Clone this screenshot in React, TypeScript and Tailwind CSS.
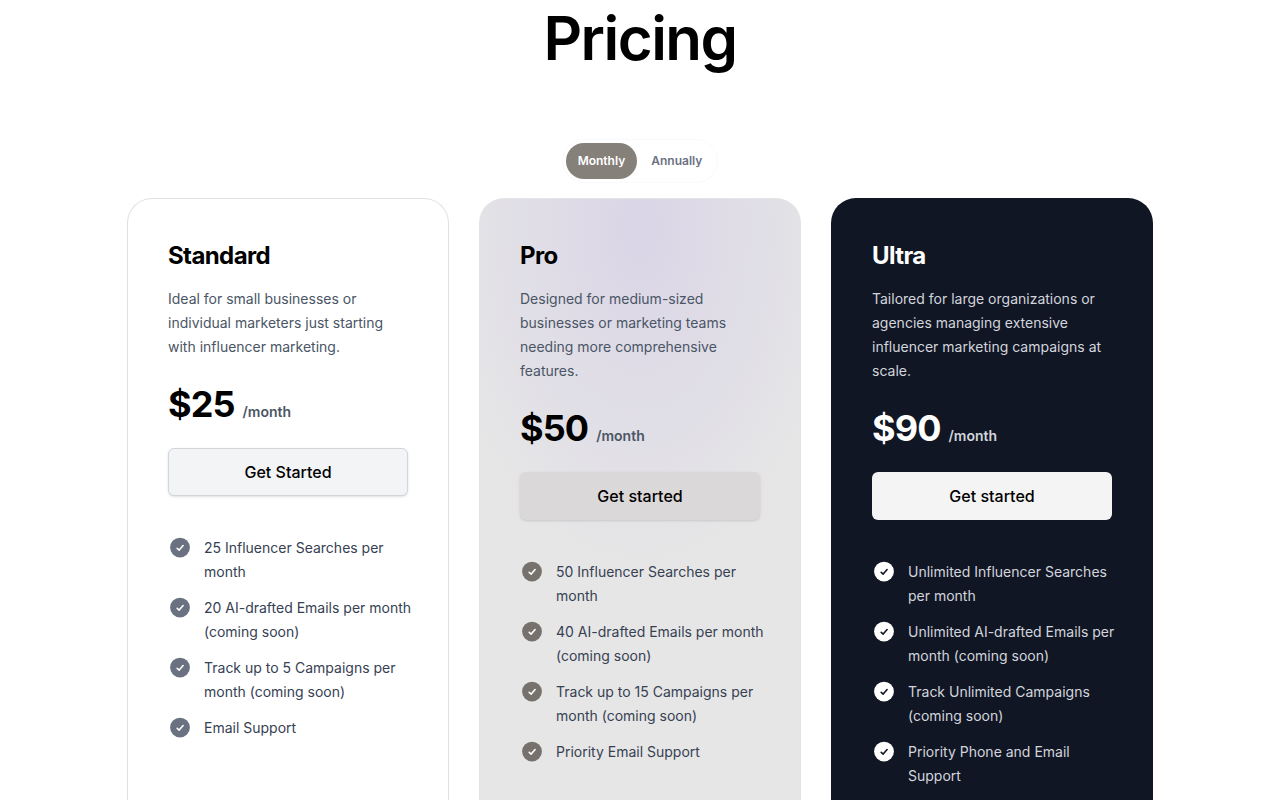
import React, { useState } from 'react';
import clsx from 'clsx';

type Plan = {
  id: string;
  name: string;
  description: string;
  monthly: string;
  annually: string;
  cta: string;
  features: string[];
};

const plans: Plan[] = [
  {
    id: 'standard',
    name: 'Standard',
    description: 'Ideal for small businesses or individual marketers just starting with influencer marketing.',
    monthly: '$25',
    annually: '$250',
    cta: 'Get Started',
    features: [
      '25 Influencer Searches per month',
      '20 AI-drafted Emails per month (coming soon)',
      'Track up to 5 Campaigns per month (coming soon)',
      'Email Support',
    ],
  },
  {
    id: 'pro',
    name: 'Pro',
    description: 'Designed for medium-sized businesses or marketing teams needing more comprehensive features.',
    monthly: '$50',
    annually: '$500',
    cta: 'Get started',
    features: [
      '50 Influencer Searches per month',
      '40 AI-drafted Emails per month (coming soon)',
      'Track up to 15 Campaigns per month (coming soon)',
      'Priority Email Support',
    ],
  },
  {
    id: 'ultra',
    name: 'Ultra',
    description:
      'Tailored for large organizations or agencies managing extensive influencer marketing campaigns at scale.',
    monthly: '$90',
    annually: '$900',
    cta: 'Get started',
    features: [
      'Unlimited Influencer Searches per month',
      'Unlimited AI-drafted Emails per month (coming soon)',
      'Track Unlimited Campaigns (coming soon)',
      'Priority Phone and Email Support',
    ],
  },
];

const CheckIcon = ({ className, stroke }: { className: string; stroke: string }) => (
  <svg viewBox="0 0 24 24" className={clsx('h-6 w-6 flex-none', className)} aria-hidden="true">
    <circle cx="12" cy="11.6" r="9.9" fill="currentColor" />
    <path
      d="M9.2 12.3l2 1.8 3.9-4.5"
      fill="none"
      stroke={stroke}
      strokeWidth="1.6"
      strokeLinecap="round"
      strokeLinejoin="round"
    />
  </svg>
);

export default function App() {
  const [period, setPeriod] = useState<'monthly' | 'annually'>('monthly');

  return (
    <main className="min-h-screen bg-white font-['Inter',sans-serif] text-black">
      <div className="mx-auto max-w-5xl pb-20">
        <h1 className="pt-1.5 text-center text-6xl leading-[64px] font-semibold tracking-tight">Pricing</h1>

        {/* Billing period */}
        <div className="mt-[69px] flex justify-center">
          <div className="flex gap-0.5 rounded-full border border-gray-50 p-[3px] text-xs font-semibold">
            {(['monthly', 'annually'] as const).map((p) => (
              <button
                key={p}
                type="button"
                aria-pressed={period === p}
                onClick={() => setPeriod(p)}
                className={clsx(
                  'h-9 cursor-pointer rounded-full px-3 capitalize',
                  period === p ? 'bg-[#85807a] text-white' : 'text-gray-500'
                )}
              >
                {p}
              </button>
            ))}
          </div>
        </div>

        {/* Plans */}
        <div className="mt-4 grid grid-cols-1 gap-8 md:grid-cols-3">
          {plans.map((plan) => {
            const pro = plan.id === 'pro';
            const ultra = plan.id === 'ultra';
            return (
              <section
                key={plan.id}
                className={clsx(
                  'rounded-3xl p-10 ring-1',
                  pro &&
                    'bg-[#e6e6e6] bg-[radial-gradient(ellipse_210px_350px_at_50%_30px,#dad5e7,#e6e6e6)] ring-[#e4e3e5]',
                  ultra && 'bg-[#111624] ring-[#111624]',
                  !pro && !ultra && 'bg-white ring-[#dfe0e2]'
                )}
              >
                <h2 className={clsx('text-2xl leading-[34px] font-bold tracking-tight', ultra && 'text-white')}>
                  {plan.name}
                </h2>
                <p className={clsx('mt-3.5 text-sm leading-6', ultra ? 'text-gray-300' : 'text-gray-600')}>
                  {plan.description}
                </p>
                <p className="mt-[25px] flex items-baseline gap-2">
                  <span className={clsx('text-4xl font-bold tracking-tight', ultra && 'text-white')}>
                    {period === 'monthly' ? plan.monthly : plan.annually}
                  </span>
                  <span className={clsx('text-sm font-semibold', ultra ? 'text-gray-300' : 'text-gray-600')}>
                    {period === 'monthly' ? '/month' : '/year'}
                  </span>
                </p>
                <button
                  type="button"
                  className={clsx(
                    'mt-6 h-12 w-full cursor-pointer rounded-md text-base font-medium',
                    pro && 'bg-[#dad8d9] shadow-sm',
                    ultra && 'bg-[#f4f4f4]',
                    !pro && !ultra && 'border border-[#d3d6d9] bg-[#f2f4f6] shadow-sm'
                  )}
                >
                  {plan.cta}
                </button>
                <ul
                  className={clsx(
                    '-mr-3 mt-10 space-y-3 text-sm leading-6',
                    ultra ? 'text-gray-300' : 'text-gray-700'
                  )}
                >
                  {plan.features.map((feature) => (
                    <li key={feature} className="flex gap-3">
                      <CheckIcon
                        className={ultra ? 'text-white' : pro ? 'text-[#76716c]' : 'text-gray-500'}
                        stroke={ultra ? '#111624' : '#ffffff'}
                      />
                      {feature}
                    </li>
                  ))}
                </ul>
              </section>
            );
          })}
        </div>
      </div>
    </main>
  );
}
